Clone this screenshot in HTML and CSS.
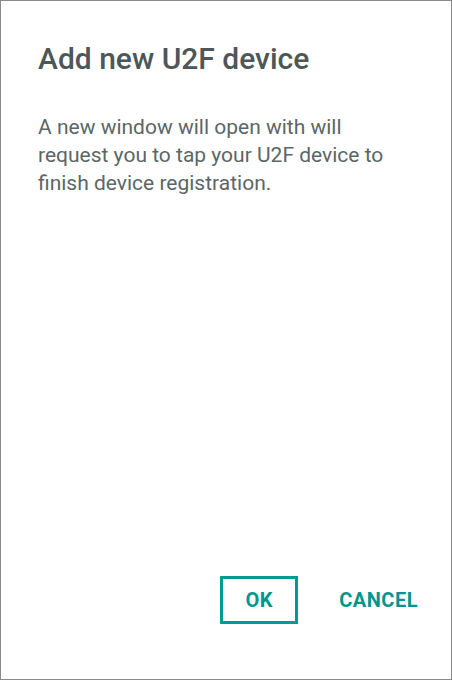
FILE: index.html
```html
<!DOCTYPE html>
<html>
<head>
<meta charset="utf-8">
<link rel="stylesheet" href="styles.css">
</head>
<body>
<div class="dialog">
  <div class="content">
    <h1 class="title">Add new U2F device</h1>
    <p class="text">A new window will open with will request you to tap your U2F device to finish device registration.</p>
  </div>
  <div class="actions">
    <button class="btn btn-ok">OK</button>
    <button class="btn btn-cancel">CANCEL</button>
  </div>
</div>
</body>
</html>
```
FILE: styles.css
```css
html, body {
  margin: 0;
  padding: 0;
  background: #fff;
}
.dialog {
  box-sizing: border-box;
  width: 452px;
  height: 680px;
  border: 1px solid #8a8a8a;
  display: flex;
  flex-direction: column;
  font-family: Roboto, "Liberation Sans", sans-serif;
}
.content {
  flex: 1;
  padding: 38px 37px 0 37px;
}
.title {
  margin: 0;
  font-size: 30px;
  font-weight: 500;
  line-height: 40px;
  color: #4d5757;
}
.text {
  margin: 34px 0 0 0;
  font-size: 21px;
  line-height: 28px;
  color: #5b6666;
  width: 360px;
}
.actions {
  display: flex;
  justify-content: flex-end;
  align-items: center;
  gap: 28px;
  padding: 0 20px 55px 0;
}
.btn {
  box-sizing: border-box;
  height: 48px;
  background: transparent;
  border: 3px solid transparent;
  font-family: Roboto, "Liberation Sans", sans-serif;
  font-size: 20px;
  font-weight: 700;
  letter-spacing: 0.5px;
  color: #00968f;
  padding: 0 10px;
  cursor: pointer;
}
.btn-ok {
  width: 78px;
  border-color: #009a94;
}
```
